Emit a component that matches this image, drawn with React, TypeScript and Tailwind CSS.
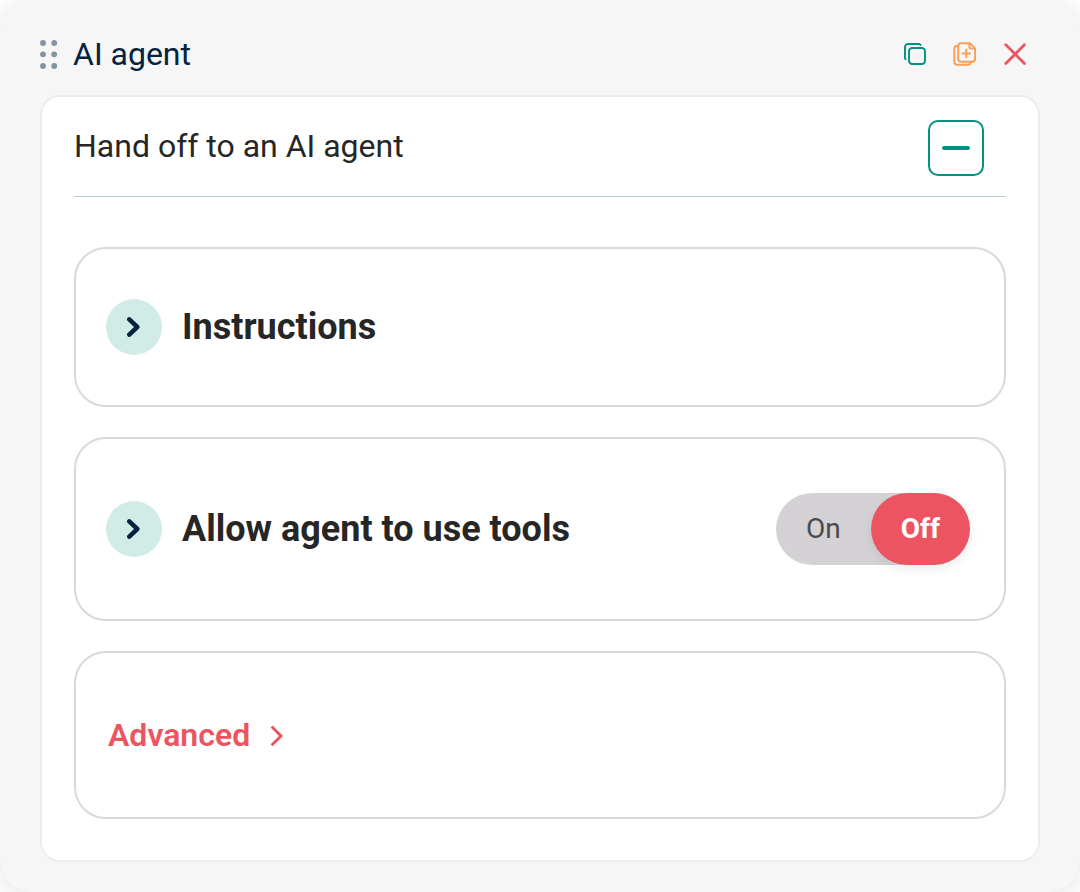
import { useState } from 'react';

const focusRing = 'focus:outline-none focus-visible:ring-2 focus-visible:ring-[#009180]';

function DragHandle() {
  return (
    <svg viewBox="0 0 18 30" className="w-[18px] h-[30px]" fill="#8493a2" aria-hidden="true">
      {[4, 15.3, 27].map((y) => (
        <g key={y}>
          <circle cx="3" cy={y} r="2.9" />
          <circle cx="14.2" cy={y} r="2.9" />
        </g>
      ))}
    </svg>
  );
}

function CopyIcon() {
  return (
    <svg viewBox="0 0 24 24" className="size-6" fill="none" stroke="#009180" strokeWidth="1.9" strokeLinecap="round" aria-hidden="true">
      <rect x="6" y="6" width="16" height="16" rx="3.2" />
      <path d="M2.6 17.2A2 2 0 0 1 2 15.6V5a3 3 0 0 1 3-3h10.4a2.6 2.6 0 0 1 2.2 1" />
    </svg>
  );
}

function AddPageIcon() {
  return (
    <svg viewBox="0 0 24 24" className="size-6" fill="none" stroke="#f79f58" strokeWidth="1.9" strokeLinecap="round" strokeLinejoin="round" aria-hidden="true">
      <path d="M16.8 1.2H8.2a3 3 0 0 0-3 3v12.6a3 3 0 0 0 3 3h10.9a3 3 0 0 0 3-3V6.4Z" />
      <path d="M16.4 1.6v2.8a2.2 2.2 0 0 0 2.2 2.2h3" />
      <path d="M4.6 4H4a2.7 2.7 0 0 0-2.7 2.7v13A3 3 0 0 0 4.3 22.7h10.9a3 3 0 0 0 2.6-2.2" />
      <path d="M13.3 7.6v7.8M9.4 11.5h7.8" />
    </svg>
  );
}

function CloseIcon() {
  return (
    <svg viewBox="0 0 24 24" className="size-6" fill="none" stroke="#ec5461" strokeWidth="2.8" strokeLinecap="round" aria-hidden="true">
      <path d="M2.8 2.8l18.6 18.6M21.4 2.8L2.8 21.4" />
    </svg>
  );
}

function ExpandButton({ label }: { label: string }) {
  return (
    <button
      type="button"
      aria-label={label}
      className={`flex size-14 shrink-0 items-center justify-center rounded-full bg-[#d1ebe7] ${focusRing}`}
    >
      <svg viewBox="0 0 14 20" className="h-5 w-3.5" fill="none" stroke="#05233f" strokeWidth="4.5" strokeLinecap="round" strokeLinejoin="round" aria-hidden="true">
        <path d="M2.3 2.4l8 7.6-8 7.6" />
      </svg>
    </button>
  );
}

function ToolsToggle() {
  const [value, setValue] = useState('Off');

  return (
    <fieldset aria-label="Allow agent to use tools" className="flex h-18 shrink-0 rounded-full bg-[#d4d2d5]">
      {['On', 'Off'].map((option) => (
        <label
          key={option}
          className={`relative flex cursor-pointer items-center rounded-full px-[30px] text-[28px] leading-8 ${
            value === option
              ? 'bg-[#ec5461] font-bold text-white shadow-[0_4px_12px_rgba(0,0,0,0.08)]'
              : 'text-[#4b4b4d]'
          }`}
        >
          <input
            type="radio"
            name="tools"
            value={option}
            checked={value === option}
            onChange={() => setValue(option)}
            className="sr-only"
          />
          {option}
        </label>
      ))}
    </fieldset>
  );
}

export default function App() {
  return (
    <div className="bg-white font-['Roboto',sans-serif] text-[#262626]">
      <section className="rounded-[32px] bg-[#f6f6f6] px-10 pb-[30px] shadow-[0_4px_24px_rgba(5,35,63,0.12)]">
        {/* Title bar */}
        <header className="flex items-center justify-between pt-8 pr-[13px] pb-[19px]">
          <div className="flex items-center gap-[15px]">
            <DragHandle />
            <h1 className="text-[32px] leading-11 text-[#05233f]">AI agent</h1>
          </div>
          <div className="flex items-center gap-[26px]">
            <button type="button" aria-label="Copy" className={focusRing}>
              <CopyIcon />
            </button>
            <button type="button" aria-label="Duplicate" className={focusRing}>
              <AddPageIcon />
            </button>
            <button type="button" aria-label="Remove" className={focusRing}>
              <CloseIcon />
            </button>
          </div>
        </header>

        <div className="rounded-[20px] border-2 border-[#ededed] bg-white px-8 pt-[23px] pb-[41px]">
          <div className="flex items-start justify-between border-b border-[#b9c9d3] pr-[22px] pb-5">
            <h2 className="pt-1 text-[32px] leading-11">Hand off to an AI agent</h2>
            <button
              type="button"
              aria-label="Collapse"
              className={`flex size-14 items-center justify-center rounded-[10px] border-2 border-[#009180] ${focusRing}`}
            >
              <span className="h-1 w-7 rounded-full bg-[#009180]" />
            </button>
          </div>

          <div className="mt-[50px] flex flex-col gap-[30px]">
            <div className="flex items-center gap-5 rounded-[32px] border-2 border-[#d9d9d9] px-[30px] py-[50px]">
              <ExpandButton label="Show instructions" />
              <h3 className="text-4xl font-bold">Instructions</h3>
            </div>

            <div className="flex items-center gap-5 rounded-[32px] border-2 border-[#d9d9d9] py-[54px] pr-[34px] pl-[30px]">
              <ExpandButton label="Show tools" />
              <h3 className="flex-1 text-4xl font-bold">Allow agent to use tools</h3>
              <ToolsToggle />
            </div>

            <div className="flex rounded-[32px] border-2 border-[#d9d9d9] px-8 py-[60px]">
              <button type="button" className={`flex items-center gap-5 text-[32px] leading-11 font-semibold text-[#ec5461] ${focusRing}`}>
                Advanced
                <svg viewBox="0 0 14 22" className="h-[22px] w-3.5" fill="none" stroke="currentColor" strokeWidth="2.9" aria-hidden="true">
                  <path d="M1.6 2.4L11 12 1.6 21.2" />
                </svg>
              </button>
            </div>
          </div>
        </div>
      </section>
    </div>
  );
}
